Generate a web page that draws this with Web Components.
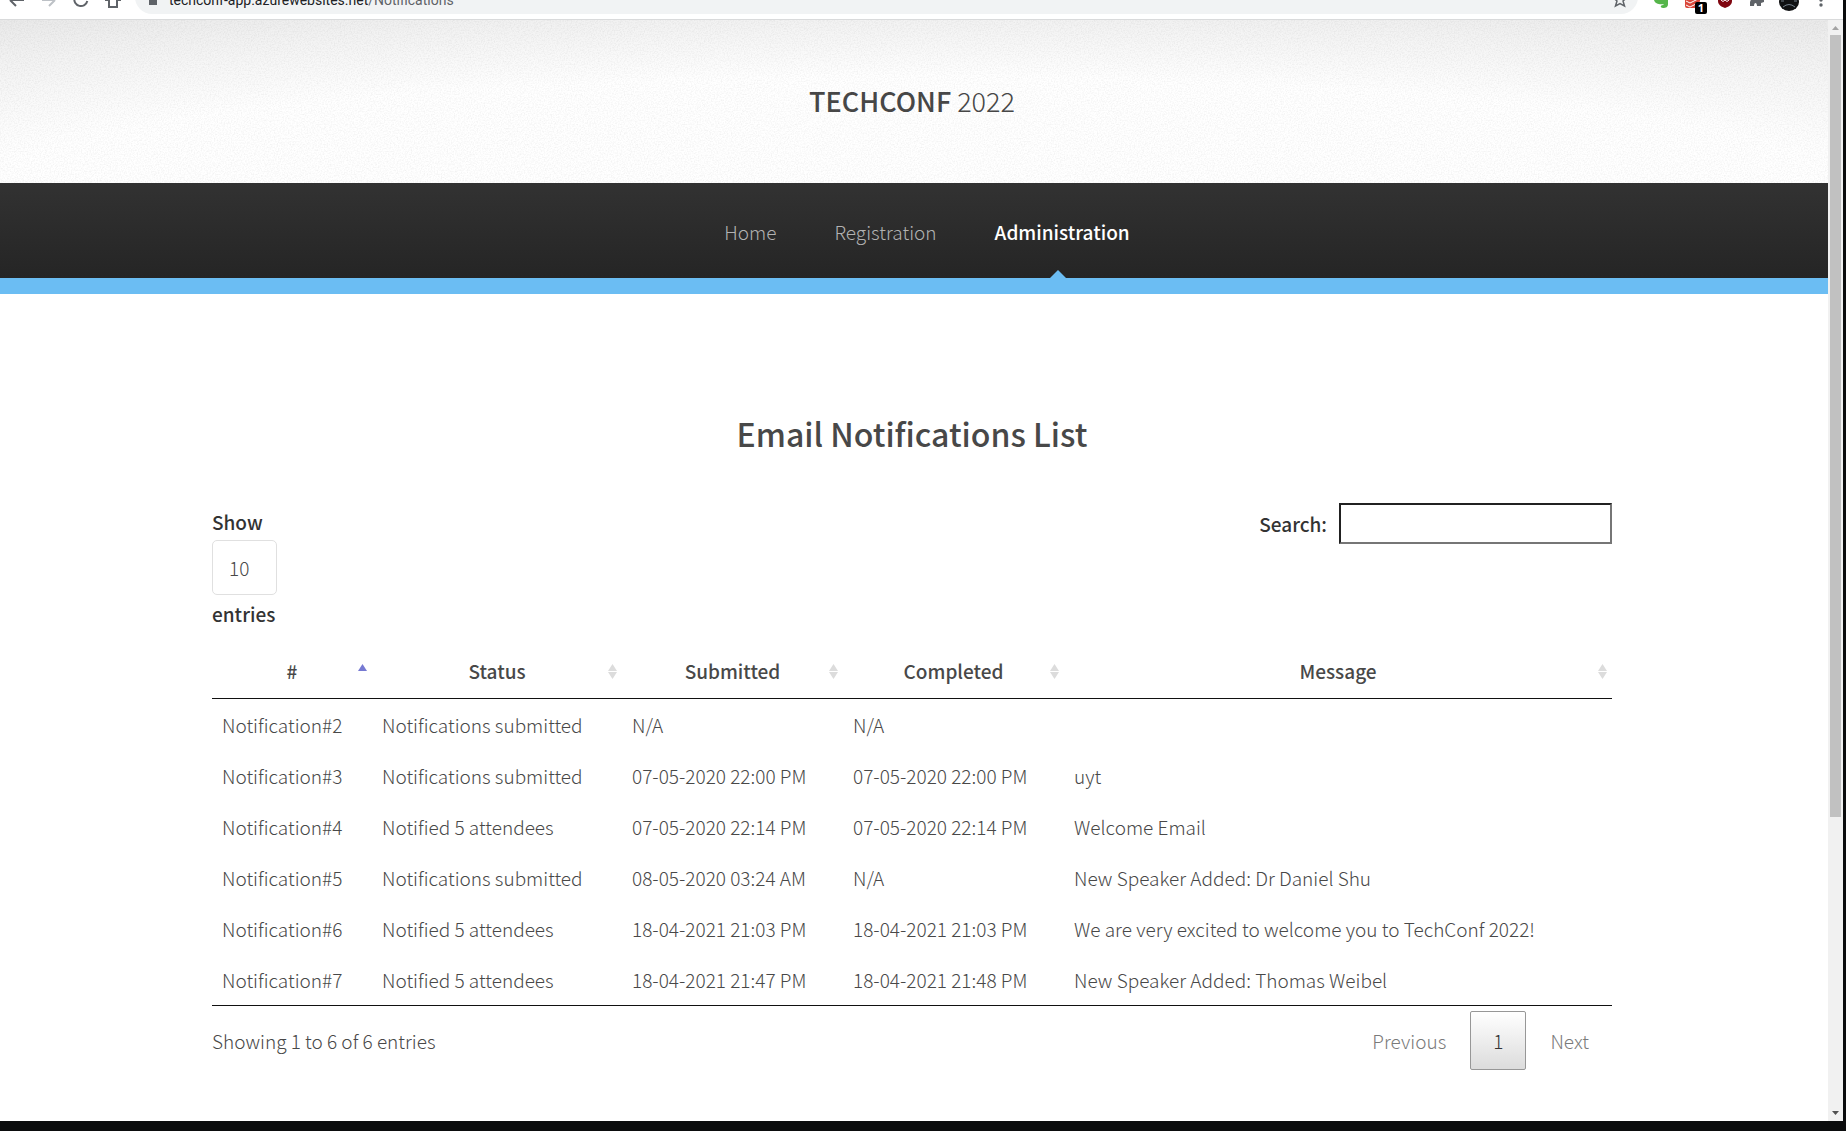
<!DOCTYPE html>
<html lang="en">
<head>
<meta charset="utf-8">
<title>TechConf 2022 - Notifications</title>
<style>
html,body{margin:0;height:100%}
body{background:#0b0c0d;font-family:"Noto Sans CJK SC","Noto Sans",sans-serif;font-weight:300;font-size:19px;line-height:30px;color:#484848}
</style>
</head>
<body>
<browser-frame>
  <browser-bar slot="bar"></browser-bar>
  <site-header></site-header>
  <site-nav></site-nav>
  <notifications-view></notifications-view>
</browser-frame>
<script>
function define(name, html, after) {
  const t = document.createElement('template');
  t.innerHTML = html;
  customElements.define(name, class extends HTMLElement {
    constructor() {
      super();
      this.attachShadow({mode: 'open'}).append(t.content.cloneNode(true));
      if (after) after(this.shadowRoot);
    }
  });
}

define('browser-frame', `
<style>
:host{display:flex;flex-direction:column;box-sizing:border-box;height:100vh;padding:0 3px 10px 0;overflow:hidden}
.view{flex:1;min-height:0;display:flex;background:#fff}
.page{flex:1;min-width:0;overflow:hidden}
.track{width:15px;background:#f1f1f1;display:flex;flex-direction:column;align-items:center}
.track svg{display:block;width:15px;height:15px;flex:none}
.rail{flex:1;width:11px}
.thumb{background:#c1c1c1;height:73%}
</style>
<slot name="bar"></slot>
<div class="view">
  <main class="page"><slot></slot></main>
  <div class="track">
    <svg viewBox="0 0 15 15"><path d="M4 10 7.500 6 11 10z" fill="#a3a3a3"/></svg>
    <div class="rail"><div class="thumb"></div></div>
    <svg viewBox="0 0 15 15"><path d="M4 5 7.500 9 11 5z" fill="#505050"/></svg>
  </div>
</div>`);

define('browser-bar', `
<style>
:host{display:flex;align-items:flex-end;box-sizing:border-box;height:20px;background:#fff;border-bottom:1px solid #d9dadb;overflow:hidden;color:#5f6368;font:400 14px/20px Roboto,"Noto Sans",sans-serif}
svg{display:block;flex:none}
.nav{width:135px;height:19px}
.omni{flex:1;height:34px;margin-bottom:5px;border-radius:17px;background:#f1f3f4;display:flex;align-items:center;padding:0 10px 0 12px;box-sizing:border-box}
.omni svg{width:12px;height:34px;margin-right:10px}
.omni .star{width:16px;margin:0}
.url{flex:1;padding-top:6px}
b{font-weight:400;color:#202124}
.ext{width:205px;height:19px}
</style>
<svg class="nav" viewBox="0 0 135 19" fill="none" stroke="#5f6368" stroke-width="2">
  <path d="M24 0H11M16 6 10 0"/><path d="M42 0H55M49 6 55 0" stroke="#bdc1c6"/>
  <path d="M74.500-2A6.500 6.500 0 0 0 87.300 1"/><path d="M105 0H109V7H117V0H121"/>
</svg>
<div class="omni">
  <svg viewBox="0 0 12 34"><path d="M2 15H10V25H2z" fill="#5f6368"/></svg>
  <span class="url"><b>techconf-app.azurewebsites.net</b>/Notifications</span>
  <svg class="star" viewBox="0 0 16 34"><path d="M8 12 10 17 15 17.500 11 21 12.500 26 8 23.500 3.500 26 5 21 1 17.500 6 17z" fill="none" stroke="#5f6368" stroke-width="1.500"/></svg>
</div>
<svg class="ext" viewBox="1638 0 205 19">
  <path d="M1654 0H1668V4C1668 7 1666 8 1663 8 1660 8 1660 5 1663 5L1664 4C1660 5 1655 4 1654 0z" fill="#55b54a"/>
  <rect x="1685" y="-6" width="15" height="14" rx="2" fill="#d9473a"/>
  <path d="M1686 1 1690 3 1700-2M1686 5 1690 7 1700 2" stroke="#fff" fill="none"/>
  <rect x="1695" y="2" width="12" height="12" rx="2" fill="#000"/>
  <text x="1701" y="12" font-size="11" font-weight="700" fill="#fff" text-anchor="middle" font-family="Open Sans">1</text>
  <path d="M1718-2H1732V1C1732 5 1728 7 1725 8 1722 7 1718 5 1718 1z" fill="#800610"/>
  <path d="M1721 0Q1723 3 1725 0Q1727 3 1729 0" stroke="#fff" fill="none"/>
  <path d="M1752-3H1764V2L1761 3V6H1757C1757 2 1754 2 1754 6H1750V2z" fill="#5f6368"/>
  <ellipse cx="1789" cy="2" rx="10" ry="9" fill="#101113"/><path d="M1781 1H1784M1794 1H1797M1783 7Q1789 2 1795 7" stroke="#74808c" fill="none"/>
  <circle cx="1821" cy="0" r="1.700" fill="#5f6368"/><circle cx="1821" cy="5" r="1.700" fill="#5f6368"/>
</svg>`);

define('site-header', `
<style>
:host{display:grid;height:163px;background:radial-gradient(ellipse 77% 100% at 50% 100%,#fff 65%,#f2f2f2 100%,#eaeaea 118%)}
svg,h1{grid-area:1/1}
svg{display:block;width:100%;height:163px;opacity:.05}
h1{margin:0;padding:0 4px 2px 0;align-self:center;text-align:center;font-size:27px;line-height:44px;font-weight:300;color:#484848}
a{color:inherit;text-decoration:none}
b{font-weight:500}
</style>
<svg aria-hidden="true"><filter id="n"><feTurbulence type="fractalNoise" baseFrequency=".7" numOctaves="2"/><feColorMatrix values="0 0 0 0 0 0 0 0 0 0 0 0 0 0 0 2 0 0 0 -.75"/></filter><rect width="100%" height="100%" filter="url(#n)"/></svg>
<h1><a href="#"><b>TECHCONF</b> 2022</a></h1>`);

define('site-nav', `
<style>
:host{display:block;background:linear-gradient(#323232,#252525 95px,#6bbdf3 95px)}
nav{display:flex;justify-content:center;gap:58px;height:111px;padding-left:26px}
a{position:relative;display:flex;align-items:center;line-height:30px;height:98px;color:#b2b2b2;text-decoration:none}
a[aria-current]{color:#fff;font-weight:500}
a[aria-current]::after{content:"";position:absolute;left:50%;top:87px;margin-left:-12px;border:8px solid transparent;border-top:0;border-bottom-color:#6bbdf3}
</style>
<nav><a href="#">Home</a><a href="#">Registration</a><a href="#" aria-current="page">Administration</a></nav>`);

define('sort-mark', `
<style>:host{display:block;width:9px;height:15px}svg{display:block}:host([asc]) .d{display:none}:host([asc]) .u{fill:#7679d2}path{fill:#dcdcdc}</style>
<svg width="9" height="15"><path class="u" d="M0 7 4.500 0 9 7z"/><path class="d" d="M0 8 4.500 15 9 8z"/></svg>`);

define('notifications-view', `
<style>
:host{display:block;max-width:1400px;margin:0 auto;padding:116px 4px 0 0}
h2{margin:0 0 47px;text-align:center;font-size:32px;line-height:46px;font-weight:500}
.tools{display:flex;justify-content:space-between;align-items:flex-start;margin-bottom:17px;font-weight:500;color:#333}
.len{display:flex;flex-direction:column;align-items:flex-start;padding-top:4px}
select{appearance:none;box-sizing:border-box;width:65px;height:55px;border:1px solid #e0e0e0;border-radius:5px;background:#fff;font:inherit;font-weight:300;color:#484848;padding:0 16px;margin:3px 0 4px}
.find{display:flex;align-items:center;gap:12px}
input{box-sizing:border-box;width:273px;height:41px;border:2px inset #767676;background:#fff;font:inherit;padding:0 8px}
table{width:100%;border-collapse:separate;border-spacing:0;table-layout:fixed;border-bottom:1px solid #111}
th{font-weight:500;padding:10px 0 12px;border-bottom:1px solid #111}
th div{display:grid;grid-template-columns:1fr 9px;align-items:center;padding:0 5px 0 0}
th span{padding-left:14px}
td{padding:0 10px;height:51px;white-space:nowrap}
.foot{display:flex;justify-content:space-between;align-items:center;padding-top:5px}
.pages{display:flex;align-items:center;gap:1px}
button{font:inherit;color:#7a7a7a;border:1px solid transparent;border-radius:2px;background:none;height:59px;padding:0 22px;box-sizing:border-box}
button[aria-current]{color:#333;border-color:#979797;background:linear-gradient(#fff,#dcdcdc)}
</style>
<h2>Email Notifications List</h2>
<div class="tools">
  <div class="len"><label for="len">Show</label><select id="len"><option>10</option><option>25</option></select><label for="len">entries</label></div>
  <div class="find"><label for="q">Search:</label><input id="q" type="search"></div>
</div>
<table>
  <colgroup><col style="width:160px"><col style="width:250px"><col style="width:221px"><col style="width:221px"><col></colgroup>
  <thead><tr></tr></thead><tbody></tbody>
</table>
<div class="foot"><span>Showing 1 to 6 of 6 entries</span>
<div class="pages"><button>Previous</button><button aria-current="page">1</button><button>Next</button></div></div>`, root => {
  root.querySelector('thead tr').innerHTML = ['#','Status','Submitted','Completed','Message']
    .map((h, i) => `<th><div><span>${h}</span><sort-mark${i ? '' : ' asc'}></sort-mark></div></th>`).join('');
  const rows = [
    ['Notification#2','Notifications submitted','N/A','N/A',''],
    ['Notification#3','Notifications submitted','07-05-2020 22:00 PM','07-05-2020 22:00 PM','uyt'],
    ['Notification#4','Notified 5 attendees','07-05-2020 22:14 PM','07-05-2020 22:14 PM','Welcome Email'],
    ['Notification#5','Notifications submitted','08-05-2020 03:24 AM','N/A','New Speaker Added: Dr Daniel Shu'],
    ['Notification#6','Notified 5 attendees','18-04-2021 21:03 PM','18-04-2021 21:03 PM','We are very excited to welcome you to TechConf 2022!'],
    ['Notification#7','Notified 5 attendees','18-04-2021 21:47 PM','18-04-2021 21:48 PM','New Speaker Added: Thomas Weibel']
  ];
  root.querySelector('tbody').innerHTML = rows.map(r => `<tr>${r.map(c => `<td>${c}</td>`).join('')}</tr>`).join('');
});
</script>
</body>
</html>
